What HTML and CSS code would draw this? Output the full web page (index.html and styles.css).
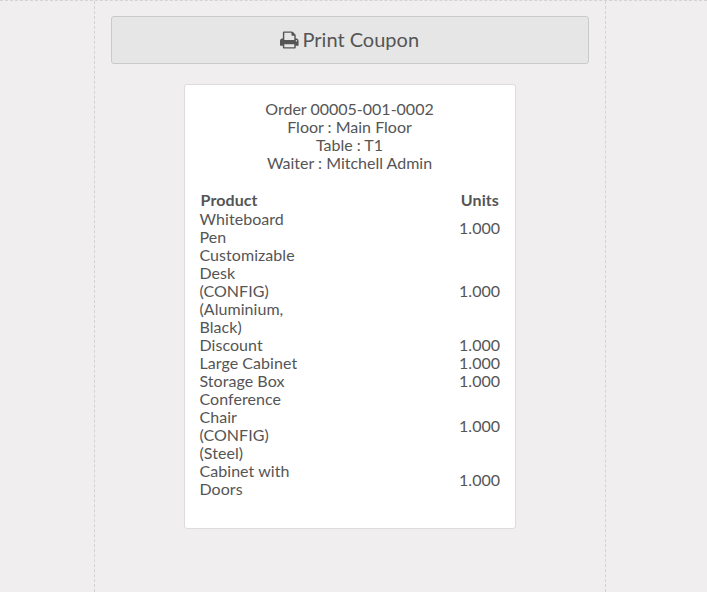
FILE: index.html
```html
<!DOCTYPE html>
<html lang="en">
<head>
<meta charset="utf-8">
<title>Print Coupon</title>
<link rel="stylesheet" href="styles.css">
</head>
<body>
<main class="content">
  <button class="print" type="button">
    <svg class="icon" viewBox="0 0 1664 1792" aria-hidden="true"><path d="M384 1536h896v-256H384v256zm0-640h896V512h-160q-40 0-68-28t-28-68V256H384v640zm1152 64q0-26-19-45t-45-19-45 19-19 45 19 45 45 19 45-19 19-45zm128 0v416q0 13-9.500 22.500t-22.500 9.500h-224v160q0 40-28 68t-68 28H352q-40 0-68-28t-28-68v-160H32q-13 0-22.500-9.500T0 1376V960q0-79 56.500-135.500T192 768h64V224q0-40 28-68t68-28h672q40 0 88 20t76 48l152 152q28 28 48 76t20 88v256h64q79 0 135.500 56.500T1664 960z"/></svg>
    <span>Print Coupon</span>
  </button>
  <section class="ticket">
    <header class="info">
      <div>Order 00005-001-0002</div>
      <div>Floor : Main Floor</div>
      <div>Table : T1</div>
      <div>Waiter : Mitchell Admin</div>
    </header>
    <table class="lines">
      <thead><tr><th class="product">Product</th><th class="gap"></th><th class="units">Units</th></tr></thead>
      <tbody>
        <tr><td>Whiteboard Pen</td><td></td><td class="qty">1.000</td></tr>
        <tr><td>Customizable Desk (CONFIG) (Aluminium, Black)</td><td></td><td class="qty">1.000</td></tr>
        <tr><td>Discount</td><td></td><td class="qty">1.000</td></tr>
        <tr><td>Large Cabinet</td><td></td><td class="qty">1.000</td></tr>
        <tr><td>Storage Box</td><td></td><td class="qty">1.000</td></tr>
        <tr><td>Conference Chair (CONFIG) (Steel)</td><td></td><td class="qty">1.000</td></tr>
        <tr><td>Cabinet with Doors</td><td></td><td class="qty">1.000</td></tr>
      </tbody>
    </table>
  </section>
</main>
</body>
</html>
```
FILE: styles.css
```css
* { box-sizing: border-box; }
body {
  margin: 0;
  background: #f0eeee;
  color: #555;
  font: 16px/18px Lato, sans-serif;
  border-top: 1px dashed #d3d3d3;
  overflow: hidden;
}
.content {
  width: 512px;
  height: 591px;
  margin-left: 94px;
  padding: 15px 16px 0;
  border: dashed #d3d3d3;
  border-width: 0 1px;
}
.print {
  display: flex;
  align-items: center;
  justify-content: center;
  gap: 4px;
  width: 478px;
  height: 48px;
  padding: 0 1px 2px 0;
  border: 1px solid #cacaca;
  border-radius: 3px;
  background: #e6e6e6;
  color: #555;
  font: 20px/24px Lato, sans-serif;
}
.icon { width: 18.600px; height: 20px; margin-top: 2px; fill: currentColor; }
.ticket {
  width: 332px;
  height: 445px;
  margin: 20px 0 0 73px;
  padding: 15px 14.500px;
  border: 1px solid #dcdcdc;
  border-radius: 3px;
  background: #fff;
}
.info { text-align: center; margin: 0 1px 18px 0; }
.lines { width: 300.500px; table-layout: fixed; border-collapse: collapse; }
.lines th { padding: 1px; text-align: left; letter-spacing: 0.1px; }
.lines td { padding: 0; vertical-align: middle; }
.lines td:first-child { letter-spacing: 0.05px; }
.product { width: 100px; }
.units { width: 42px; }
.lines .units, .lines .qty { text-align: right; }
```
